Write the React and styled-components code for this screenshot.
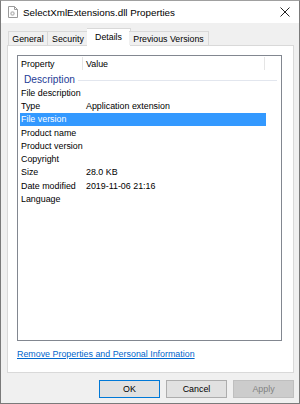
import React from "react";
import styled, { createGlobalStyle } from "styled-components";

const GlobalStyle = createGlobalStyle`
  html, body { margin: 0; padding: 0; background: #ffffff; }
  body { font-family: "Liberation Sans", Arial, sans-serif; }
`;

const rows = [
  { name: "File description", value: "" },
  { name: "Type", value: "Application extension" },
  { name: "File version", value: "", selected: true },
  { name: "Product name", value: "" },
  { name: "Product version", value: "" },
  { name: "Copyright", value: "" },
  { name: "Size", value: "28.0 KB" },
  { name: "Date modified", value: "2019-11-06 21:16" },
  { name: "Language", value: "" },
];

const tabs = [
  { label: "General", width: 40 },
  { label: "Security", width: 41 },
  { label: "Details", width: 44, active: true },
  { label: "Previous Versions", width: 80 },
];

const FileIcon = () => (
  <svg width="10" height="12" viewBox="0 0 10 12">
    <path d="M0.5 0.5h6l3 3v8h-9z" fill="#fff" stroke="#9a9a9a" />
    <path d="M6.5 0.5v3h3" fill="none" stroke="#9a9a9a" />
    <circle cx="4.5" cy="7.5" r="2.2" fill="#b8b8b8" />
    <circle cx="4.5" cy="7.5" r="0.9" fill="#fff" />
  </svg>
);

const CloseIcon = () => (
  <svg width="10" height="10" viewBox="0 0 10 10">
    <path d="M0.5 0.5l9 9M9.5 0.5l-9 9" stroke="#222" strokeWidth="1" />
  </svg>
);

const App = () => (
  <>
    <GlobalStyle />
    <Window>
      <TitleBar>
        <TitleLeft>
          <FileIcon />
          <TitleText>SelectXmlExtensions.dll Properties</TitleText>
        </TitleLeft>
        <CloseButton>
          <CloseIcon />
        </CloseButton>
      </TitleBar>
      <Body>
        <TabStrip>
          {tabs.map(t => (
            <Tab key={t.label} active={t.active} width={t.width}>{t.label}</Tab>
          ))}
        </TabStrip>
        <Panel>
          <ListView>
            <Header>
              <HeaderCell width={65}>Property</HeaderCell>
              <HeaderCell width={182}>Value</HeaderCell>
              <HeaderCell />
            </Header>
            <GroupRow>
              <GroupTitle>Description</GroupTitle>
              <GroupLine />
            </GroupRow>
            {rows.map(r => (
              <Row key={r.name} selected={r.selected}>
                <NameCell>{r.name}</NameCell>
                <ValueCell>{r.value}</ValueCell>
              </Row>
            ))}
          </ListView>
          <RemoveLink href="#">Remove Properties and Personal Information</RemoveLink>
        </Panel>
        <ButtonRow>
          <DialogButton primary>OK</DialogButton>
          <DialogButton>Cancel</DialogButton>
          <DialogButton disabled>Apply</DialogButton>
        </ButtonRow>
      </Body>
    </Window>
  </>
);

export default App;

const Window = styled.div`
  width: 300px;
  height: 404px;
  box-sizing: border-box;
  border: 1px solid #7a7a7a;
  border-top-color: #a0a0a0;
  background: #f0f0f0;
  display: flex;
  flex-direction: column;
`;

const TitleBar = styled.div`
  height: 22px;
  background: #ffffff;
  display: flex;
  align-items: center;
  justify-content: space-between;
  padding: 0 7px 0 7px;
`;

const TitleLeft = styled.div`
  display: flex;
  align-items: center;
  gap: 5px;
`;

const TitleText = styled.span`
  font-size: 9.8px;
  color: #000;
`;

const CloseButton = styled.div`
  display: flex;
  align-items: center;
  padding-right: 2px;
`;

const Body = styled.div`
  flex: 1;
  display: flex;
  flex-direction: column;
  padding: 5px 5px 0 6px;
`;

const TabStrip = styled.div`
  display: flex;
  align-items: flex-end;
  padding-left: 1px;
  height: 17px;
  position: relative;
  z-index: 1;
`;

const Tab = styled.div`
  box-sizing: border-box;
  width: ${p => p.width}px;
  height: ${p => (p.active ? "18px" : "14px")};
  margin: ${p => (p.active ? "0 -2px -1px" : "0")};
  border: 1px solid #d9d9d9;
  border-bottom: none;
  background: ${p => (p.active ? "#ffffff" : "#f0f0f0")};
  font-size: 8.8px;
  color: #000;
  display: flex;
  align-items: center;
  justify-content: center;
  padding-bottom: ${p => (p.active ? "2px" : "0")};
  white-space: nowrap;
  & + & { border-left: ${p => (p.active ? "1px solid #d9d9d9" : "none")}; }
`;

const Panel = styled.div`
  box-sizing: border-box;
  height: 328px;
  background: #ffffff;
  border: 1px solid #d9d9d9;
  padding: 9px 11px 0 9px;
  display: flex;
  flex-direction: column;
`;

const ListView = styled.div`
  box-sizing: border-box;
  height: 286px;
  border: 1px solid #828790;
  padding: 0 0 0 2px;
  display: flex;
  flex-direction: column;
`;

const Header = styled.div`
  display: flex;
  height: 17px;
  margin-left: -2px;
  flex-shrink: 0;
`;

const HeaderCell = styled.div`
  box-sizing: border-box;
  width: ${p => (p.width ? `${p.width}px` : "auto")};
  flex: ${p => (p.width ? "none" : "1")};
  padding-left: 3px;
  border-right: ${p => (p.width ? "1px solid #e5e5e5" : "none")};
  font-size: 8.9px;
  color: #000;
  display: flex;
  align-items: center;
  margin: 1px 0 3px;
`;

const GroupRow = styled.div`
  height: 13px;
  display: flex;
  align-items: center;
  padding-left: 4px;
  gap: 3px;
  margin-right: 4px;
`;

const GroupTitle = styled.span`
  font-size: 10.2px;
  color: #1e3c96;
`;

const GroupLine = styled.div`
  flex: 1;
  height: 1px;
  background: #e2e6ee;
  margin-top: 1px;
`;

const Row = styled.div`
  height: 13.3px;
  width: 246px;
  display: flex;
  align-items: center;
  background: ${p => (p.selected ? "#3399ff" : "transparent")};
  color: ${p => (p.selected ? "#ffffff" : "#000000")};
  font-size: 8.9px;
`;

const NameCell = styled.div`
  width: 66px;
  padding-left: 1px;
  box-sizing: border-box;
  white-space: nowrap;
`;

const ValueCell = styled.div`
  flex: 1;
  white-space: nowrap;
`;

const RemoveLink = styled.a`
  margin-top: 8px;
  font-size: 8.9px;
  color: #0066cc;
  text-decoration: underline;
  align-self: flex-start;
`;

const ButtonRow = styled.div`
  display: flex;
  justify-content: flex-end;
  gap: 6px;
  margin-top: 7px;
`;

const DialogButton = styled.div`
  box-sizing: border-box;
  width: 61px;
  height: 18px;
  display: flex;
  align-items: center;
  justify-content: center;
  font-size: 8.9px;
  background: ${p => (p.disabled ? "#cccccc" : "#e1e1e1")};
  color: ${p => (p.disabled ? "#838383" : "#000000")};
  border: 1px solid ${p => (p.primary ? "#0078d7" : p.disabled ? "#bfbfbf" : "#adadad")};
`;
